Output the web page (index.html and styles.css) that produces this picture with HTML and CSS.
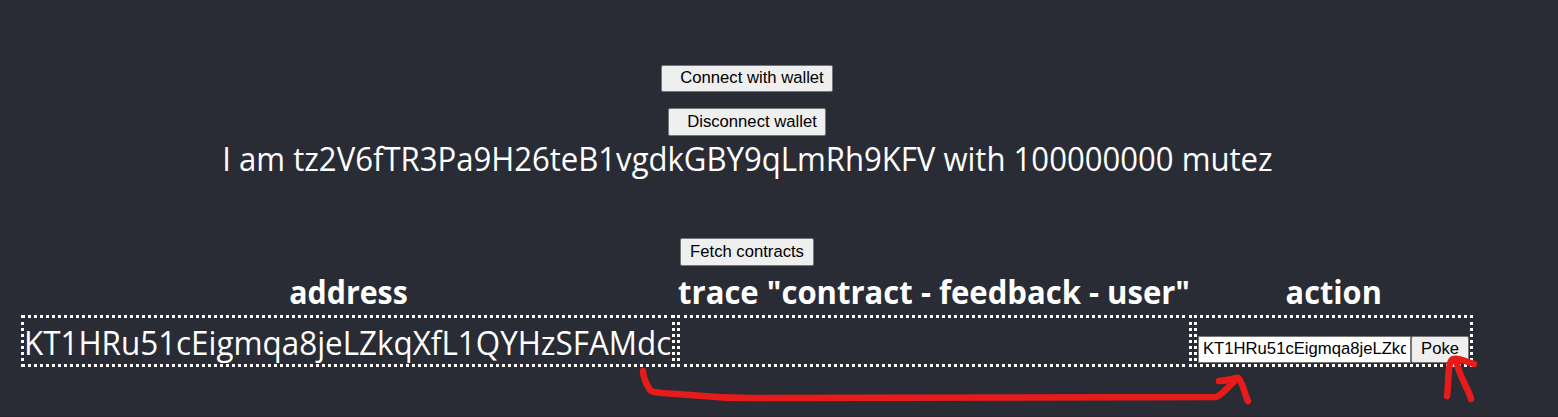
FILE: index.html
```html
<!DOCTYPE html>
<html lang="en">
<head>
<meta charset="utf-8">
<title>Contracts</title>
<link rel="stylesheet" href="styles.css">
</head>
<body>
<main class="app">
  <button class="btn connect">Connect with wallet</button>
  <button class="btn disconnect">Disconnect wallet</button>
  <div class="account"><span class="account-text">I am tz2V6fTR3Pa9H26teB1vgdkGBY9qLmRh9KFV with 100000000 mutez</span></div>
  <button class="btn fetch">Fetch contracts</button>
  <div class="contracts">
    <div class="head"><span class="h-address">address</span></div>
    <div class="head"><span class="h-trace">trace "contract - feedback - user"</span></div>
    <div class="head"><span class="h-action">action</span></div>
    <div class="cell"><span class="address">KT1HRu51cEigmqa8jeLZkqXfL1QYHzSFAMdc</span></div>
    <div class="cell"></div>
    <div class="cell action">
      <input class="field" type="text" value="KT1HRu51cEigmqa8jeLZkqXfL1QYHzSFAMdc">
      <button class="btn poke">Poke</button>
    </div>
  </div>
</main>
<svg class="marks" viewBox="0 0 1558 417">
  <path d="M643 371C643 379 647 385 650 390C654 394 672 393 690 395C710 397 720 398 750 398L1216 397C1222 396 1231 383 1238 378"/>
  <path d="M1219 381C1227 381 1233 378 1238 378C1243 382 1244 393 1248 401"/>
  <path d="M1447 396C1449 384 1447 362 1453 359C1459 357 1468 363 1474 364M1457 364C1461 380 1469 390 1471 399"/>
</svg>
</body>
</html>
```
FILE: styles.css
```css
* { box-sizing: border-box; }
body {
  margin: 0;
  height: 417px;
  overflow: hidden;
  position: relative;
  background: #2a2c35;
  border-bottom: 1px solid #272331;
  color: #fff;
  font-family: "Segoe UI", "Open Sans", sans-serif;
  font-size: 33px;
}
.app {
  width: 1494px;
  padding-top: 65px;
  display: flex;
  flex-direction: column;
  align-items: center;
}
.btn {
  height: 28px;
  padding: 0;
  border: 1px solid #767676;
  border-radius: 2px;
  background: #efefef;
  color: #000;
  font: 16.67px/24px Arial, "Liberation Sans", sans-serif;
  white-space: nowrap;
}
.connect { width: 172px; height: 27px; padding: 0 0 2px 10px; }
.disconnect { width: 158px; margin-top: 16px; padding-left: 10px; }
.account { height: 48px; line-height: 46px; white-space: nowrap; }
.account-text { display: inline-block; transform: scaleX(.942); }
.fetch { width: 134px; margin-top: 54px; }
.contracts {
  width: 1452px;
  display: grid;
  grid-template-columns: 654px 515px 279px;
  grid-template-rows: 47px 52px;
  column-gap: 2px;
  row-gap: 2px;
}
.head {
  display: flex;
  justify-content: center;
  font-weight: 700;
  line-height: 51px;
  white-space: nowrap;
}
.h-address { transform: scaleX(.918); }
.h-trace { transform: scaleX(.941); }
.h-action { transform: scaleX(.93); }
.cell {
  border: 3px dotted #fff;
  line-height: 50px;
  white-space: nowrap;
}
.address {
  display: inline-block;
  transform: scaleX(.951);
  transform-origin: left;
}
.action {
  display: flex;
  align-items: flex-end;
  padding: 0 1px 1px;
}
.field {
  width: 213px;
  height: 27px;
  padding: 0 4px 2px;
  border: 1px solid #767676;
  background: #fff;
  color: #000;
  font: 16.67px/23px Arial, "Liberation Sans", sans-serif;
}
.poke { width: 58px; height: 27px; padding-bottom: 2px; }
.marks {
  position: absolute;
  inset: 0;
  width: 1558px;
  height: 417px;
  fill: none;
  stroke: #e81b1b;
  stroke-width: 6.5;
  stroke-linecap: round;
  stroke-linejoin: round;
}
```
